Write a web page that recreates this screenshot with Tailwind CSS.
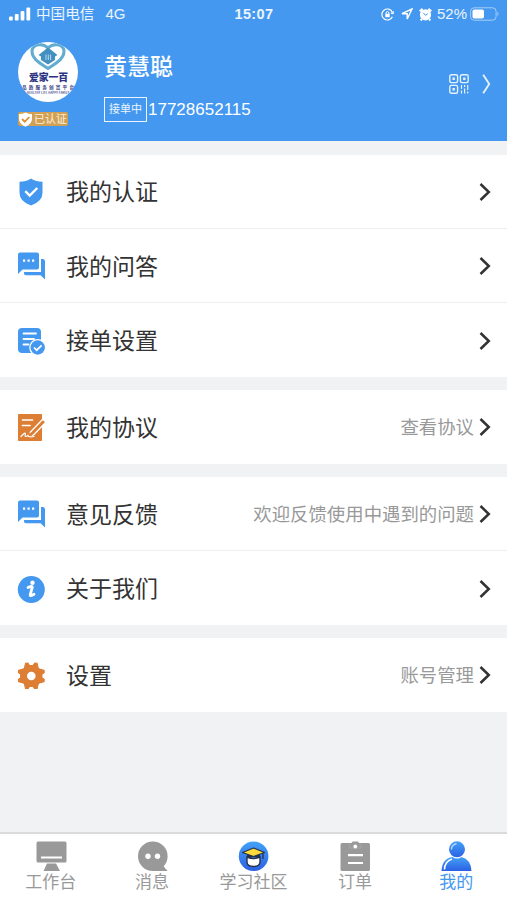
<!DOCTYPE html>
<html lang="zh-CN">
<head>
    <meta charset="UTF-8">
    <meta name="viewport" content="width=device-width, initial-scale=1.0">
    <title>我的</title>
    <script src="https://cdn.jsdelivr.net/npm/@tailwindcss/browser@4"></script>
</head>
<body class="bg-[#f0f2f4] font-['Liberation_Sans','Noto_Sans_CJK_SC',sans-serif]">
    <!-- Shared icons -->
    <svg class="hidden">
        <symbol id="arrow" viewBox="0 0 12 20">
            <path d="M1.5 2 L9.8 10 L1.5 18" fill="none" stroke="currentColor" stroke-width="2.5"/>
        </symbol>
        <symbol id="chat" viewBox="0 0 28 28">
            <path d="M3 .5 H20 Q22 .5 22 2.5 V15.500 Q22 17.500 20 17.500 H5.500 L1 22 V2.500 Q1 .5 3 .5Z" fill="#4498ef"/>
            <path d="M24 7 H25.5 Q28 7 28 9 V27.5 L23.5 23.200 H9 Q7 23.200 7 21.500 V20 H24Z" fill="#4498ef"/>
            <path d="M6 7.500h2.200v2.200h-2.200z M10.500 7.500h2.200v2.200h-2.200z M15 7.500h2.200v2.200h-2.200z" fill="#fff"/>
        </symbol>
    </svg>

    <div class="flex flex-col h-[900px] w-full overflow-hidden">
        <!-- Header -->
        <header class="h-[141px] shrink-0 bg-[#4498ef] text-white">
            <!-- Status bar -->
            <div class="h-7 grid grid-cols-3 items-center pl-[9px] pr-[7px] text-[15px] text-white/90">
                <div class="flex items-center">
                    <svg class="w-[22px] h-[14px]" viewBox="0 0 22 14" fill="#fff">
                        <rect x="0" y="9.5" width="3.8" height="4" rx="1"/>
                        <rect x="5.8" y="7" width="3.8" height="6.5" rx="1"/>
                        <rect x="11.6" y="4" width="3.8" height="9.5" rx="1"/>
                        <rect x="17.4" y="0.5" width="3.8" height="13" rx="1"/>
                    </svg>
                    <span class="ml-[5px] pt-[2px] text-[14.6px]">中国电信</span>
                    <span class="ml-[11px]">4G</span>
                </div>
                <div class="text-center font-bold text-[14.5px] tracking-[.4px] pt-px pr-px">15:07</div>
                <div class="flex items-center justify-end">
                    <svg class="w-[13px] h-[13px]" viewBox="0 0 13 13" fill="none" stroke="#fff" stroke-width="1.2">
                        <path d="M11.4 4.3 A5.5 5.5 0 1 0 11.4 8.7 M9.8 5.2 L12 5.6 L12.6 3.4"/>
                        <rect x="4.3" y="5.8" width="4.4" height="3.4" fill="#fff" stroke="none"/>
                        <path d="M5.1 6 V5 Q5.1 3.6 6.5 3.6 T7.9 5 V6" stroke-width="1"/>
                    </svg>
                    <svg class="w-[12px] h-[12px] ml-[7px]" viewBox="0 0 12 12" fill="none" stroke="#fff" stroke-width="1.4">
                        <path d="M11 1 L1 5.7 H6.2 V11Z"/>
                    </svg>
                    <svg class="w-[13px] h-[13px] ml-[6px]" viewBox="0 0 13 13">
                        <circle cx="6.5" cy="6.800" r="5.600" fill="#fff"/>
                        <path d="M.7 3.2 L3.6 .9 M12.3 3.2 L9.4 .9 M3 11 L1.6 12.5 M10 11 L11.4 12.5" stroke="#fff" stroke-width="2"/>
                        <path d="M4.300 4.800 L6.5 7.3 L8.800 5.8" fill="none" stroke="#4498ef" stroke-width="1"/>
                    </svg>
                    <span class="ml-[5px] text-[15px]">52%</span>
                    <svg class="w-[30px] h-[14px] ml-[3px]" viewBox="0 0 30 14">
                        <rect x=".6" y=".8" width="25.5" height="12.4" rx="3.5" fill="none" stroke="#a5cdf7" stroke-width="1"/>
                        <rect x="2.5" y="2.5" width="11.5" height="9" rx="1.8" fill="#fff"/>
                        <path d="M27.5 4.8 Q29.5 7 27.5 9.2Z" fill="#a5cdf7"/>
                    </svg>
                </div>
            </div>

            <!-- Profile -->
            <div class="flex h-[113px] pl-[18px] pr-[16px]">
                <div class="w-[60px] pt-[14px]">
                    <svg class="w-[60px] h-[60px]" viewBox="0 0 60 60" font-family="'Noto Sans CJK SC',sans-serif" text-anchor="middle">
                        <defs><clipPath id="face"><circle cx="30" cy="30" r="30"/></clipPath></defs>
                        <circle cx="30" cy="30" r="30" fill="#fff"/>
                        <g clip-path="url(#face)">
                            <path d="M30 26.5 C22 21 14 17 14 9.5 C14 2 25 .5 30 6 C35 .5 46 2 46 9.5 C46 17 38 21 30 26.5Z" fill="none" stroke="#62acd0" stroke-width="3"/>
                            <path d="M30 5.5 L39.500 13 L37 14.500 V18 L30 22.500 L23 18 V14.500 L20.500 13Z" fill="#438fc0"/>
                            <path d="M28 12.500 V18 M30.300 12.500 V18 M32.600 12.500 V18" stroke="#b9dced" stroke-width="1"/>
                            <text x="30.500" y="38.500" font-size="9.800" font-weight="900" fill="#2c3182">爱家一百</text>
                            <text x="30" y="46.500" font-size="4.600" font-weight="700" textLength="52" fill="#353a85">品质服务创富平台</text>
                            <text x="30" y="51.500" font-size="2.800" font-weight="700" fill="#4b4f92" textLength="42">HEALTHY LIFE HAPPY FAMILY</text>
                        </g>
                    </svg>
                    <div class="mt-[10px] flex h-[14px] w-[50px] items-center rounded-[2px] bg-[#d3a052]">
                        <svg class="h-[15px] w-[15px] shrink-0" viewBox="0 0 15 15">
                            <path d="M7.500 .5 Q10.500 2 14 2 V7 Q14 12 7.500 14.700 Q1 12 1 7 V2 Q4.500 2 7.500 .5Z" fill="#fff"/>
                            <path d="M4 7 L6.800 9.700 L11.300 5" fill="none" stroke="#d99239" stroke-width="1.800"/>
                        </svg>
                        <span class="ml-px text-[11px] leading-none whitespace-nowrap text-white/85">已认证</span>
                    </div>
                </div>
                <div class="ml-[26px] flex-1">
                    <h1 class="mt-[22px] text-[23px] leading-[34px] font-medium">黄慧聪</h1>
                    <div class="mt-[12px] flex items-center h-[26px]">
                        <span class="flex h-[25px] w-[43px] items-center justify-center border-[1.500px] border-white/90 text-[11px] whitespace-nowrap text-white/90">接单中</span>
                        <span class="ml-px text-[17px] leading-none">17728652115</span>
                    </div>
                </div>
                <div class="flex h-[111px] items-center">
                    <svg class="h-[20px] w-[20px]" viewBox="0 0 20 20" fill="none" stroke="#e5f1fd" stroke-width="1.400">
                        <rect x=".8" y=".8" width="7.800" height="7.800" rx="1.500"/>
                        <rect x="11.400" y=".8" width="7.800" height="7.800" rx="1.500"/>
                        <rect x=".8" y="11.400" width="7.800" height="7.800" rx="1.500"/>
                        <path d="M3.500 4.700h2.400 M14.100 4.700h2.400 M3.500 15.300h2.400" stroke-width="2.400"/>
                        <path d="M12.500 11v4 M12.500 16.500v3 M15.600 11v2 M15.600 14.500v5 M18.700 11v5 M18.700 17.500v2" stroke-width="1.200"/>
                    </svg>
                    <svg class="ml-[13px] h-[22px] w-[9px]" viewBox="0 0 9 22" fill="none" stroke="#e5f1fd" stroke-width="1.900">
                        <path d="M1.200 1.800 L7.200 11 L1.200 20.200"/>
                    </svg>
                </div>
            </div>
        </header>

        <!-- Menu -->
        <main class="mt-[14px] flex flex-1 flex-col gap-[13px] text-[23px] text-[#333]">
            <section class="bg-white divide-y divide-[#eeeff1]">
                <a href="#" class="flex h-[74px] items-center pl-[17px] pr-[16px]">
                    <svg class="h-[28px] w-[28px]" viewBox="0 0 28 28">
                        <path d="M14 .5 Q19 3.700 25.500 3.700 V15 Q25.500 23.500 14 27.500 Q2.500 23.500 2.500 15 V3.700 Q9 3.700 14 .5Z" fill="#4498ef"/>
                        <path d="M8.300 13.200 L12.700 17.500 L20.300 10" fill="none" stroke="#fff" stroke-width="2.400"/>
                    </svg>
                    <span class="ml-[21px] flex-1 pt-[2px]">我的认证</span>
                    <svg class="h-5 w-3"><use href="#arrow"/></svg>
                </a>
                <a href="#" class="flex h-[74px] items-center pl-[17px] pr-[16px]">
                    <svg class="h-[28px] w-[28px]"><use href="#chat"/></svg>
                    <span class="ml-[21px] flex-1 pt-[3px]">我的问答</span>
                    <svg class="h-5 w-3"><use href="#arrow"/></svg>
                </a>
                <a href="#" class="flex h-[74px] items-center pl-[17px] pr-[16px] pt-px">
                    <svg class="h-[28px] w-[28px]" viewBox="0 0 28 28">
                        <rect x="1" y="1" width="23" height="25" rx="4" fill="#4498ef"/>
                        <path d="M6.500 6.500H19 M6.500 12H17 M6.500 17.500H11.500" stroke="#fff" stroke-width="1.800" stroke-linecap="round"/>
                        <circle cx="20.700" cy="20.500" r="8.500" fill="#fff"/>
                        <circle cx="20.700" cy="20.500" r="7.200" fill="#4498ef"/>
                        <path d="M17 20.500 L19.700 23.200 L24.600 18.300" fill="none" stroke="#fff" stroke-width="1.700"/>
                    </svg>
                    <span class="ml-[21px] flex-1 pt-[2px]">接单设置</span>
                    <svg class="h-5 w-3"><use href="#arrow"/></svg>
                </a>
            </section>

            <section class="bg-white">
                <a href="#" class="flex h-[74px] items-center pl-[17px] pr-[16px]">
                    <svg class="h-[28px] w-[28px]" viewBox="0 0 28 28" fill="none">
                        <rect x="1" y="1" width="24" height="27" rx=".8" fill="#dc7e34"/>
                        <path d="M5.500 7H15.500 M5.500 12.500H13" stroke="#fff" stroke-width="1.700" stroke-linecap="round"/>
                        <path d="M26 9 L15.500 20" stroke="#fff" stroke-width="5.500" stroke-linecap="round"/>
                        <path d="M26 9 L16 19.500 L13.800 21.500" stroke="#dc7e34" stroke-width="3" stroke-linecap="round"/>
                        <path d="M4 23.500 Q8.500 18.500 8.500 21 Q7 25 11 22.500 Q11 24.500 17 23.500" stroke="#fff" stroke-width="1.200" stroke-linecap="round"/>
                    </svg>
                    <span class="ml-[21px] flex-1 pt-[2px]">我的协议</span>
                    <span class="mr-[5px] pt-[2px] text-[18.400px] text-[#999]">查看协议</span>
                    <svg class="h-5 w-3"><use href="#arrow"/></svg>
                </a>
            </section>

            <section class="bg-white divide-y divide-[#eeeff1]">
                <a href="#" class="flex h-[74px] items-center pl-[17px] pr-[16px]">
                    <svg class="h-[28px] w-[28px]"><use href="#chat"/></svg>
                    <span class="ml-[21px] flex-1 pt-[3px]">意见反馈</span>
                    <span class="mr-[5px] pt-[2px] text-[18.400px] text-[#999]">欢迎反馈使用中遇到的问题</span>
                    <svg class="h-5 w-3"><use href="#arrow"/></svg>
                </a>
                <a href="#" class="flex h-[74px] items-center pl-[17px] pr-[16px] pt-px">
                    <svg class="h-[28px] w-[28px]" viewBox="0 0 28 28">
                        <circle cx="14.300" cy="14.500" r="13.500" fill="#4498ef"/>
                        <circle cx="15.500" cy="7.800" r="2.200" fill="#fff"/>
                        <path d="M11 12.500 Q15.500 10.500 15.300 12.500 L13.200 19.500 Q12.800 21.800 17 19.300" fill="none" stroke="#fff" stroke-width="2.800" stroke-linecap="round"/>
                    </svg>
                    <span class="ml-[21px] flex-1 pt-[2px]">关于我们</span>
                    <svg class="h-5 w-3"><use href="#arrow"/></svg>
                </a>
            </section>

            <section class="bg-white">
                <a href="#" class="flex h-[74px] items-center pl-[17px] pr-[16px]">
                    <svg class="h-[28px] w-[28px]" viewBox="-14.300 -15 28 28">
                        <g fill="#dc7e34" stroke="#dc7e34" stroke-width="1.200" stroke-linejoin="round">
                            <circle r="10.300"/>
                            <path id="tooth" d="M-6.800 -8 L-5.700 -12.700 L-3.500 -12.900 L-1.800 -10.500 H1.800 L3.500 -12.900 L5.700 -12.700 L6.800 -8Z"/>
                            <use href="#tooth" transform="rotate(90)"/>
                            <use href="#tooth" transform="rotate(180)"/>
                            <use href="#tooth" transform="rotate(270)"/>
                        </g>
                        <circle r="4.300" fill="#fff"/>
                    </svg>
                    <span class="ml-[21px] flex-1 pt-[2px]">设置</span>
                    <span class="mr-[5px] pt-[2px] text-[18.400px] text-[#999]">账号管理</span>
                    <svg class="h-5 w-3"><use href="#arrow"/></svg>
                </a>
            </section>
        </main>

        <!-- Tab bar -->
        <nav class="grid h-[68px] shrink-0 grid-cols-5 border-t-2 border-[#dadbdd] bg-white text-[17px] leading-[22px] text-[#999]">
            <a href="#" class="flex flex-col items-center pt-[6px]">
                <svg class="h-[32px] w-[32px]" viewBox="0 0 32 32" fill="#999">
                    <rect x="1.500" y="1.500" width="30" height="21" rx="1.500"/>
                    <path d="M12 23.500 H21 L25 31 H8.500Z"/>
                    <path d="M6 17.500H27" stroke="#fff" stroke-width="2"/>
                </svg>
                <span>工作台</span>
            </a>
            <a href="#" class="flex flex-col items-center pt-[6px]">
                <svg class="h-[32px] w-[32px]" viewBox="0 0 32 32" fill="#999">
                    <circle cx="16.800" cy="16.300" r="14.800"/>
                    <path d="M16 31 H31.500 L26.500 25Z"/>
                    <circle cx="12" cy="16.300" r="2.700" fill="#fff"/>
                    <circle cx="21.500" cy="16.300" r="2.700" fill="#fff"/>
                </svg>
                <span>消息</span>
            </a>
            <a href="#" class="flex flex-col items-center pt-[6px]">
                <svg class="h-[32px] w-[32px]" viewBox="0 0 32 32">
                    <defs><linearGradient id="blue" x1="0" y1="0" x2="0" y2="1"><stop stop-color="#42a2f7"/><stop offset="1" stop-color="#2c60e3"/></linearGradient></defs>
                    <circle cx="16.600" cy="16.300" r="14.800" fill="url(#blue)"/>
                    <path d="M10 17 V22 Q10 26.500 16.500 26.500 T23 22 V17 Q16.500 20 10 17Z" fill="#fff" stroke="#26324c" stroke-width="1.400"/>
                    <path d="M10 14 V18 Q16.500 16 23 18 V14Z" fill="#26324c"/>
                    <path d="M5.500 12.500 L16.500 8 L27.500 12.500 L16.500 16.500Z" fill="#fddb38" stroke="#26324c" stroke-width="1.200" stroke-linejoin="round"/>
                    <path d="M26 13.500V19" stroke="#26324c" stroke-width="1.300"/>
                </svg>
                <span>学习社区</span>
            </a>
            <a href="#" class="flex flex-col items-center pt-[6px]">
                <svg class="h-[32px] w-[32px]" viewBox="0 0 32 32" fill="#999">
                    <path d="M3 3 H12 Q13 3 13.500 1.500 H19 Q19.500 3 21 3 H29.500 Q31 3 31 4.500 V29.500 Q31 31 29.500 31 H3 Q1.500 31 1.500 29.500 V4.500 Q1.500 3 3 3Z"/>
                    <path d="M10.500 4 V8 H22 V4" fill="none" stroke="#aaa" stroke-width=".8"/>
                    <circle cx="16.300" cy="6.500" r="1.900" fill="#fff"/>
                    <path d="M9 15.200H24 M9 23H24" stroke="#fff" stroke-width="2.200"/>
                </svg>
                <span>订单</span>
            </a>
            <a href="#" class="flex flex-col items-center pt-[6px] text-[#4498ef]">
                <svg class="h-[32px] w-[32px]" viewBox="0 0 32 32" fill="none">
                    <circle cx="17" cy="9.300" r="8" fill="url(#blue)"/>
                    <path d="M11.300 9.500 Q11.800 4.500 16.500 3.600" stroke="#b9dcff" stroke-width="1.400"/>
                    <path d="M1.500 31 Q2 18.500 12.500 17 Q17 20 21.500 17 Q31 19.500 31.500 31Z" fill="url(#blue)"/>
                    <path d="M4.500 29.500 Q4.500 21.500 12 19" stroke="#fff" stroke-width="1.600"/>
                </svg>
                <span>我的</span>
            </a>
        </nav>
    </div>
</body>
</html>
